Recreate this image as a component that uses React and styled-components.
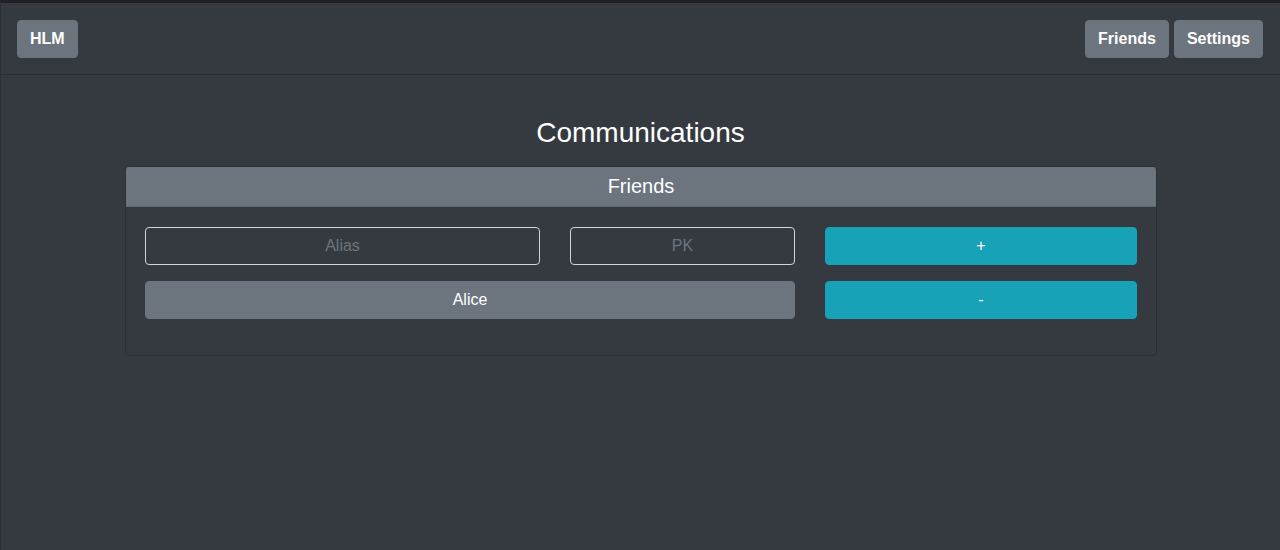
import React from "react";
import styled, { createGlobalStyle } from "styled-components";

const Global = createGlobalStyle`
  html, body { margin: 0; padding: 0; background: #343a40; }
  body {
    font-family: "Liberation Sans", Arial, sans-serif;
    color: #fff;
    font-size: 16px;
  }
  * { box-sizing: border-box; }
`;

const Page = styled.div`
  min-height: 550px;
  background: #343a40;
  border-top: 3px solid #1e2023;
  border-left: 1px solid #2c3035;
  display: flex;
  flex-direction: column;
`;

const NavBar = styled.header`
  display: flex;
  align-items: center;
  justify-content: space-between;
  padding: 17px 17px 16px 16px;
  border-bottom: 1px solid #2a2e33;
`;

const NavGroup = styled.div`
  display: flex;
  gap: 5px;
`;

const NavButton = styled.button`
  font-family: "Liberation Sans", Arial, sans-serif;
  font-weight: 700;
  font-size: 16px;
  line-height: 24px;
  color: #fff;
  background: #6c757d;
  border: 1px solid #6c757d;
  border-radius: 4px;
  padding: 6px 12px;
  cursor: pointer;
`;

const Main = styled.main`
  display: flex;
  flex-direction: column;
  align-items: center;
  padding-top: 41px;
`;

const Title = styled.h3`
  margin: 0 0 16px;
  font-size: 28px;
  font-weight: 400;
  line-height: 34px;
  color: #fff;
`;

const Card = styled.section`
  width: 1032px;
  margin-left: 1px;
  border: 1px solid #2b3035;
  border-radius: 4px;
  overflow: hidden;
  background: #343a40;
`;

const CardHeader = styled.div`
  height: 40px;
  display: flex;
  align-items: center;
  justify-content: center;
  background: #6c757d;
  border-bottom: 1px solid #5f676f;
  font-size: 20px;
  color: #fff;
`;

const CardBody = styled.div`
  display: grid;
  grid-template-columns: 395px 225px 1fr;
  column-gap: 30px;
  row-gap: 16px;
  padding: 20px 19px 36px 19px;
`;

const Input = styled.input`
  height: 38px;
  font-family: "Liberation Sans", Arial, sans-serif;
  font-size: 16px;
  text-align: center;
  color: #fff;
  background: transparent;
  border: 1px solid #ced4da;
  border-radius: 4px;
  outline: none;
  &::placeholder { color: #6c757d; }
`;

const Button = styled.button`
  height: 38px;
  font-family: "Liberation Sans", Arial, sans-serif;
  font-size: 16px;
  color: #fff;
  background: ${(p) => (p.$variant === "info" ? "#17a2b8" : "#6c757d")};
  border: 1px solid ${(p) => (p.$variant === "info" ? "#17a2b8" : "#6c757d")};
  border-radius: 4px;
  cursor: pointer;
  grid-column: ${(p) => p.$span || "auto"};
`;

export default function App() {
  return (
    <>
      <Global />
      <Page>
        <NavBar>
          <NavButton>HLM</NavButton>
          <NavGroup>
            <NavButton>Friends</NavButton>
            <NavButton>Settings</NavButton>
          </NavGroup>
        </NavBar>
        <Main>
          <Title>Communications</Title>
          <Card>
            <CardHeader>Friends</CardHeader>
            <CardBody>
              <Input placeholder="Alias" />
              <Input placeholder="PK" />
              <Button $variant="info">+</Button>
              <Button $span="1 / 3">Alice</Button>
              <Button $variant="info">-</Button>
            </CardBody>
          </Card>
        </Main>
      </Page>
    </>
  );
}
